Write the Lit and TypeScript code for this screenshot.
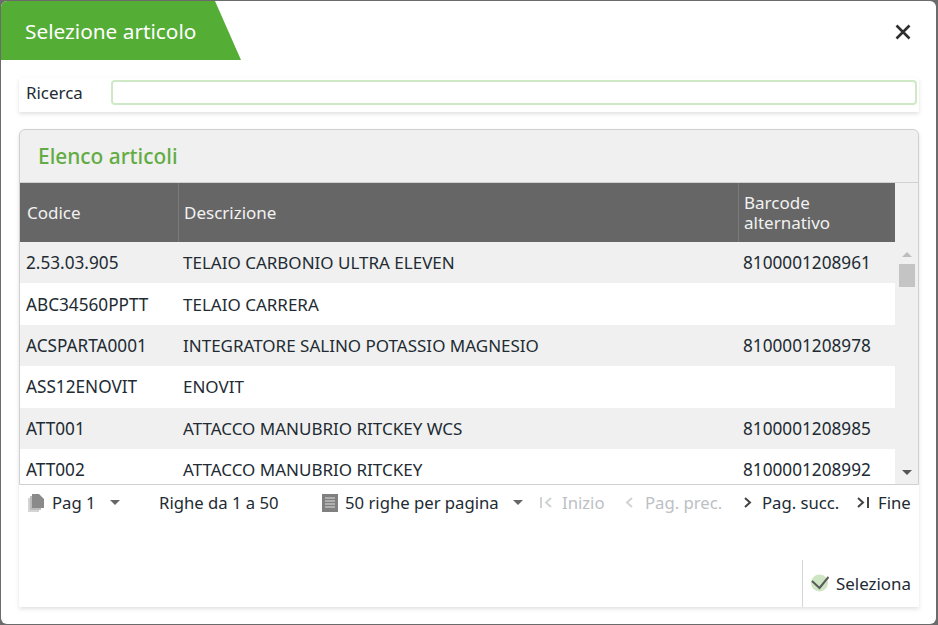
import { LitElement, html, css } from "lit";
import { customElement } from "lit/decorators.js";

const rows = [
  ["2.53.03.905", "TELAIO CARBONIO ULTRA ELEVEN", "8100001208961"],
  ["ABC34560PPTT", "TELAIO CARRERA", ""],
  ["ACSPARTA0001", "INTEGRATORE SALINO POTASSIO MAGNESIO", "8100001208978"],
  ["ASS12ENOVIT", "ENOVIT", ""],
  ["ATT001", "ATTACCO MANUBRIO RITCKEY WCS", "8100001208985"],
  ["ATT002", "ATTACCO MANUBRIO RITCKEY", "8100001208992"],
];

const caret = html`<svg class="caret" width="10" height="5" viewBox="0 0 10 5"><path d="M0 0h10L5 5z" fill="#666"/></svg>`;

@customElement("app-root")
export class AppRoot extends LitElement {
  static styles = css`
    :host {
      display: block;
      width: 938px;
      height: 625px;
      background: #6b6b6b;
      font-family: "Noto Sans", "Open Sans", sans-serif;
      font-size: 16.9px;
      color: #222b33;
      overflow: hidden;
    }
    .modal {
      box-sizing: border-box;
      width: 935px;
      height: 623px;
      margin-left: 1px;
      margin-top: 1px;
      background: #fff;
      border-radius: 6px;
      display: flex;
      flex-direction: column;
      overflow: hidden;
    }
    .head {
      height: 59px;
      display: flex;
      justify-content: space-between;
      flex: none;
    }
    .title {
      width: 240px;
      height: 59px;
      box-sizing: border-box;
      padding: 13px 0 0 24px;
      background: #54ad35;
      color: #fff;
      font-size: 20.8px;
      line-height: 34px;
      clip-path: polygon(0 0, 214px 0, 240px 100%, 0 100%);
    }
    .close {
      margin: 23px 25px 0 0;
    }
    .search {
      margin: 18px 17px 0 18px;
      height: 34px;
      box-sizing: border-box;
      padding-bottom: 5px;
      background: #fff;
      box-shadow: 0 2px 4px rgba(0, 0, 0, 0.12);
      display: flex;
      align-items: center;
      flex: none;
    }
    .search label {
      width: 92px;
      padding-left: 7px;
      box-sizing: border-box;
      flex: none;
    }
    .search .input {
      flex: 1;
      height: 25px;
      box-sizing: border-box;
      border: 2px solid #cfe8c5;
      border-radius: 4px;
      margin-right: 2px;
    }
    .content {
      margin: 17px 17px 0 18px;
      height: 478px;
      flex: none;
      background: #fff;
      box-shadow: 0 2px 4px rgba(0, 0, 0, 0.12);
      border-radius: 6px 6px 0 0;
      display: flex;
      flex-direction: column;
    }
    .panel {
      border: 1px solid #d0d0d0;
      border-radius: 6px 6px 0 0;
      background: #f0f0f0;
      flex: none;
      overflow: hidden;
    }
    .panel h2 {
      margin: 0;
      height: 53px;
      box-sizing: border-box;
      padding: 10px 0 0 18px;
      font-size: 20.9px;
      line-height: 32px;
      font-weight: 500;
      color: #62ac43;
      border-bottom: 1px solid #d0d0d0;
    }
    .grid {
      display: flex;
      height: 301px;
    }
    .table {
      width: 875px;
      flex: none;
      background: #fff;
      overflow: hidden;
    }
    .row {
      display: grid;
      grid-template-columns: 158px 560px 1fr;
      height: 41.4px;
      align-items: center;
      font-size: 17.2px;
      white-space: nowrap;
    }
    .row.odd {
      background: #f0f0f0;
    }
    .row span:nth-child(1) {
      padding-left: 6px;
    }
    .row span:nth-child(2) {
      padding-left: 5px;
      font-size: 17px;
    }
    .row span:nth-child(3) {
      padding-left: 5px;
    }
    .row.hdr {
      height: 59px;
      background: #666;
      color: #f2f2f2;
      font-size: 17px;
      line-height: 20px;
      white-space: normal;
    }
    .row.hdr span {
      height: 100%;
      display: flex;
      align-items: center;
      box-sizing: border-box;
      border-left: 1px solid #7a7a7a;
      padding-left: 5px;
    }
    .row.hdr span:first-child {
      border-left: 0;
      padding-left: 7px;
    }
    .scroll {
      flex: 1;
      display: flex;
      flex-direction: column;
      align-items: center;
      justify-content: space-between;
      padding: 69px 0 9px;
      box-sizing: border-box;
      background: #f0f0f0;
    }
    .thumb {
      width: 16px;
      height: 23px;
      background: #c4c4c4;
      margin-top: 7px;
    }
    .top {
      display: flex;
      flex-direction: column;
      align-items: center;
    }
    .pager {
      height: 38px;
      box-sizing: border-box;
      padding: 0 0 3px 9px;
      flex: none;
      display: flex;
      align-items: center;
      font-size: 16.7px;
      white-space: nowrap;
    }
    .item {
      display: flex;
      align-items: center;
    }
    .off {
      color: #bcc0c4;
    }
    .w-pag { width: 131px; }
    .w-righe { width: 163px; }
    .w-per { width: 218px; }
    .w-inizio { width: 85px; }
    .w-prec { width: 119px; }
    .w-succ { width: 113px; }
    .m7 { margin-right: 7px; }
    .m8 { margin-right: 8px; }
    .m9 { margin-right: 9px; }
    .m10 { margin-right: 10px; }
    .m12 { margin-right: 12px; }
    .caret {
      margin-left: 14px;
    }
    .foot {
      flex: 1;
      display: flex;
      justify-content: flex-end;
      align-items: flex-end;
    }
    .sel {
      height: 47px;
      box-sizing: border-box;
      border-left: 1px solid #d6d6d6;
      padding: 0 8px 1px;
      display: flex;
      align-items: center;
      gap: 7px;
      font-size: 16.9px;
    }
  `;

  render() {
    return html`
      <div class="modal">
        <div class="head">
          <div class="title">Selezione articolo</div>
          <svg class="close" width="16" height="16" viewBox="0 0 16 16">
            <path d="M1.5 1.5 14.5 14.5M14.5 1.5 1.5 14.5" stroke="#2e2e2e" stroke-width="2.6" fill="none"/>
          </svg>
        </div>
        <div class="search">
          <label>Ricerca</label>
          <div class="input"></div>
        </div>
        <div class="content">
          <div class="panel">
            <h2>Elenco articoli</h2>
            <div class="grid">
              <div class="table">
                <div class="row hdr">
                  <span>Codice</span><span>Descrizione</span><span>Barcode<br />alternativo</span>
                </div>
                ${rows.map(
                  (r, i) => html`<div class="row ${i % 2 === 0 ? "odd" : ""}">
                    <span>${r[0]}</span><span>${r[1]}</span><span>${r[2]}</span>
                  </div>`
                )}
              </div>
              <div class="scroll">
                <div class="top">
                  <svg width="10" height="5" viewBox="0 0 10 5"><path d="M0 5h10L5 0z" fill="#bdbdbd"/></svg>
                  <div class="thumb"></div>
                </div>
                <svg width="10" height="5" viewBox="0 0 10 5"><path d="M0 0h10L5 5z" fill="#555"/></svg>
              </div>
            </div>
          </div>
          <div class="pager">
            <div class="item w-pag">
              <svg class="m8" width="16" height="18" viewBox="0 0 16 18">
                <path d="M0 4h11v14H0z" fill="#d4d4d4"/>
                <path d="M2 2h11v14H2z" fill="#bcbcbc"/>
                <path d="M4 0h7l5 5v9H4z" fill="#8a8a8a"/>
              </svg>
              Pag 1${caret}
            </div>
            <div class="item w-righe">Righe da 1 a 50</div>
            <div class="item w-per">
              <svg class="m7" width="16" height="18" viewBox="0 0 16 18">
                <path d="M0 0h16v18H0z" fill="#808080"/>
                <path d="M3 4h10M3 7h10M3 10h10M3 13h10" stroke="#ddd" stroke-width="1.2"/>
              </svg>
              50 righe per pagina${caret}
            </div>
            <div class="item off w-inizio">
              <svg class="m10" width="12" height="11" viewBox="0 0 12 11">
                <path d="M1 0v11M11 1 6 5.5 11 10" stroke="#d0d3d6" stroke-width="2" fill="none"/>
              </svg>
              Inizio
            </div>
            <div class="item off w-prec">
              <svg class="m12" width="8" height="11" viewBox="0 0 8 11">
                <path d="M7 1 2 5.5 7 10" stroke="#d0d3d6" stroke-width="2" fill="none"/>
              </svg>
              Pag. prec.
            </div>
            <div class="item w-succ">
              <svg class="m10" width="8" height="11" viewBox="0 0 8 11">
                <path d="M1 1 6 5.5 1 10" stroke="#444" stroke-width="2" fill="none"/>
              </svg>
              Pag. succ.
            </div>
            <div class="item">
              <svg class="m9" width="12" height="11" viewBox="0 0 12 11">
                <path d="M1 1 6 5.5 1 10M11 0v11" stroke="#444" stroke-width="2" fill="none"/>
              </svg>
              Fine
            </div>
          </div>
          <div class="foot">
            <div class="sel">
              <svg width="18" height="18" viewBox="0 0 18 18">
                <circle cx="8.5" cy="9" r="8.5" fill="#cde5c3"/>
                <path d="M1 7 8.5 14 17.5 3" stroke="#5a5a5a" stroke-width="2" fill="none"/>
              </svg>
              Seleziona
            </div>
          </div>
        </div>
      </div>
    `;
  }
}
